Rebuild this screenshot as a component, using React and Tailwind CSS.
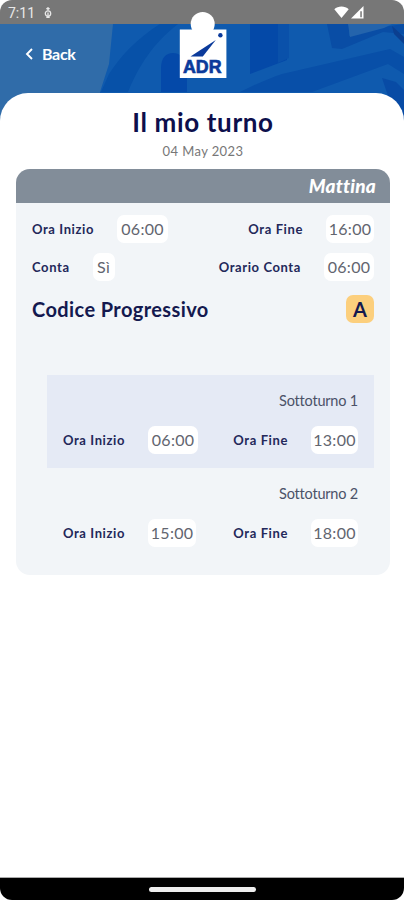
import React from 'react';
import clsx from 'clsx';

const shift = {
  title: 'Il mio turno',
  date: '04 May 2023',
  name: 'Mattina',
  code: 'A',
  subShifts: [
    { id: 1, title: 'Sottoturno 1', start: '06:00', startWidth: 'w-[50px]', end: '13:00', active: true },
    { id: 2, title: 'Sottoturno 2', start: '15:00', startWidth: 'w-[48px]', end: '18:00', active: false }
  ]
};

function StatusBar() {
  return (
    <div className="h-6 bg-[#777777] flex items-center justify-between pl-[8px] pr-[40px] text-[#e8e8e8]">
      <div className="flex items-center gap-[9px] pt-[2px]">
        <span className="font-[Roboto] text-[14px] leading-none">7:11</span>
        <svg viewBox="0 0 8 12" className="w-[8px] h-[12px]" fill="none" stroke="currentColor" strokeWidth="1.3">
          <path d="M4 0.5v3M2.4 2 4 .8 5.6 2" />
          <circle cx="4" cy="6.6" r="2.7" />
          <path d="M4 5.5v4.5M2.3 10.4h3.4" />
        </svg>
      </div>
      <div className="flex items-center gap-[2px] text-white">
        <svg viewBox="0 0 15 12" className="w-[15px] h-[12px]" fill="currentColor">
          <path d="M7.5 12 0.3 3.2C4-.4 11-.4 14.7 3.2z" />
        </svg>
        <svg viewBox="0 0 13 13" className="w-[13px] h-[13px]">
          <path d="M0 12.5 12.5 0v12.5z" fill="#fff" />
          <path d="M9.3 5.2h1.5v6H9.3z" fill="#777777" />
        </svg>
      </div>
    </div>
  );
}

function HeaderArt() {
  return (
    <svg viewBox="0 0 404 106" className="absolute inset-0 w-full h-full" preserveAspectRatio="none">
      <rect width="404" height="106" fill="#0f5aae" />
      <path d="M0 0h113L109 40 100 68V106H0z" fill="#306ca9" />
      <path d="M160 0h18C158 16 142 34 128 68h-27l8-18C122 30 138 14 160 0z" fill="#0751a8" />
      <path d="M161 68V44c0-10 5-15 12-15s14 6 14 16v23z" fill="#0449a9" />
      <path d="M250 0h37v36l-37 14z" fill="#0449a8" />
      <path d="M278 0h11v34l-11 5z" fill="#0a51aa" />
      <path d="M327 0h22v12l34-9 21-3v10l-21-2-41 17-10-1z" fill="#094da5" />
      <path d="M348 0h44l-8 4-34 9z" fill="#2464ac" />
      <path d="M240 68c16-8 30-14 42-18l108-25 14 8v17l-16-10-76 28z" fill="#084fa8" />
      <path d="M382 54l14 4 8 8v40l-16-34z" fill="#084ba5" />
      <path d="M392 2l12 11v7l-10-10z" fill="#0b3f90" />
    </svg>
  );
}

function Logo() {
  return (
    <svg viewBox="0 0 48 68" className="absolute z-10 left-[179px] top-[11px] w-[48px] h-[68px]">
      <circle cx="23.7" cy="13" r="12" fill="#fff" />
      <rect x="0.8" y="18.5" width="46.6" height="48.5" fill="#fff" />
      <circle cx="41.4" cy="24.3" r="2.2" fill="#0b3a9b" />
      <path d="M11.5 45.4 36.8 29 23.8 45.4z" fill="#0b3a9b" />
      <text
        x="4"
        y="62.3"
        textLength="38.5"
        lengthAdjust="spacingAndGlyphs"
        fontFamily="Liberation Sans"
        fontWeight="700"
        fontSize="19"
        fill="#0b3a9b"
        stroke="#0b3a9b"
        strokeWidth="0.7"
      >
        ADR
      </text>
    </svg>
  );
}

function TimePill({ width, children }) {
  return (
    <span className={clsx('h-7 rounded-[7px] bg-white flex items-center justify-center text-[16px] tracking-[0.3px] text-[#62656f]', width)}>
      {children}
    </span>
  );
}

function Field({ label, value, width }) {
  return (
    <div className="flex items-center gap-[23px]">
      <span className="pt-[2px] text-[13px] font-bold tracking-[0.6px] text-[#23285a] whitespace-nowrap">{label}</span>
      <TimePill width={width}>{value}</TimePill>
    </div>
  );
}

function SubShift({ item }) {
  return (
    <div className={clsx('h-[92.5px] px-4 pt-[15px]', item.active && 'bg-[#e5eaf5]')}>
      <p className="h-[22px] leading-[22px] text-right text-[14.5px] tracking-[-0.2px] text-[#4b5268]">{item.title}</p>
      <div className="mt-[14px] flex justify-between">
        <Field label="Ora Inizio" value={item.start} width={item.startWidth} />
        <Field label="Ora Fine" value={item.end} width="w-[47px]" />
      </div>
    </div>
  );
}

export default function App() {
  return (
    <div className="w-[404px] h-[900px] bg-white overflow-hidden font-[Lato,sans-serif]">
      <div className="relative h-full flex flex-col rounded-t-[12px] overflow-hidden">
        <StatusBar />
        <Logo />

        {/* Header */}
        <header className="relative h-[106px] shrink-0">
          <HeaderArt />
          <button className="relative flex items-center gap-[9px] h-[59px] pl-[25px] text-white">
            <svg viewBox="0 0 8 12" className="w-[8px] h-[12px]" fill="none" stroke="currentColor" strokeWidth="1.9">
              <path d="M7 1 2 6l5 5" />
            </svg>
            <span className="text-[16px] font-bold tracking-[-0.3px]">Back</span>
          </button>
        </header>

        {/* Shift detail */}
        <main className="relative -mt-[37px] flex-1 bg-white rounded-t-[28px] px-4 pt-[13px]">
          <h1 className="h-8 leading-8 text-center text-[26px] font-bold tracking-[0.65px] text-[#0d0f4c] pl-[2px]">{shift.title}</h1>
          <p className="mt-[3px] h-5 leading-5 text-center text-[13px] tracking-[0.4px] text-[#777777] pl-[2px]">{shift.date}</p>

          <section className="mt-[8px] mr-[-1px] w-[374px] h-[406px] rounded-[14px] bg-[#f2f5f8] overflow-hidden">
            <div className="h-[34px] bg-[#828d99] flex items-center justify-end pr-[14px]">
              <span className="text-[19px] font-black italic tracking-[0.2px] text-white">{shift.name}</span>
            </div>

            <div className="px-4">
              <div className="pt-3 flex justify-between">
                <Field label="Ora Inizio" value="06:00" width="w-[51px]" />
                <Field label="Ora Fine" value="16:00" width="w-[48px]" />
              </div>
              <div className="mt-[10px] flex justify-between">
                <Field label="Conta" value="Sì" width="w-[22px]" />
                <Field label="Orario Conta" value="06:00" width="w-[50px]" />
              </div>
              <div className="mt-[14px] h-7 flex items-center justify-between">
                <h2 className="text-[20px] font-bold tracking-[0.4px] text-[#14194f]">Codice Progressivo</h2>
                <span className="w-7 h-7 rounded-[7px] bg-[#fccf7d] flex items-center justify-center text-[20px] font-bold text-[#14194f]">
                  {shift.code}
                </span>
              </div>
            </div>

            <div className="mt-[52px] ml-[31px] mr-[16px]">
              {shift.subShifts.map((item) => (
                <SubShift key={item.id} item={item} />
              ))}
            </div>
          </section>
        </main>

        {/* System navigation */}
        <div className="bg-white">
          <div className="h-[23px] bg-black border-t border-[#aaa] rounded-b-[12px] flex items-center justify-center">
            <div className="w-[107px] h-[5px] rounded-full bg-[#eeeeee]" />
          </div>
        </div>
      </div>
    </div>
  );
}
